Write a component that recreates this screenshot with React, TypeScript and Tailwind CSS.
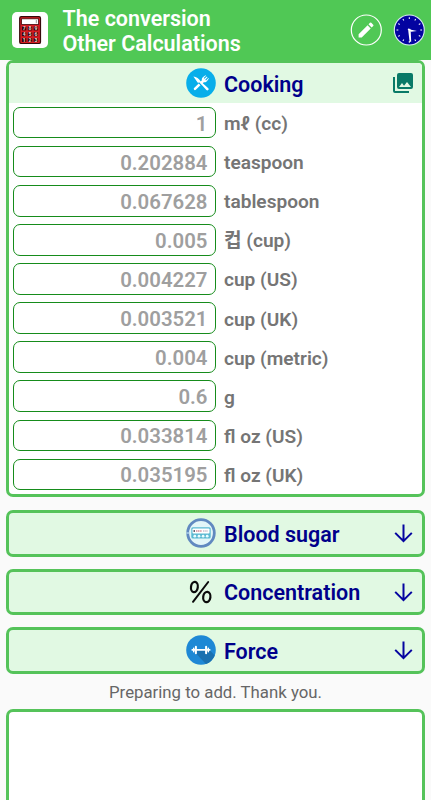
import { useState, type ReactNode } from "react";

type unitType = {
    name: string,
    value: string,
}

type sectionType = {
    title: string,
    icon: ReactNode,
}

const units: unitType[] = [
    { name: "mℓ (cc)", value: "1" },
    { name: "teaspoon", value: "0.202884" },
    { name: "tablespoon", value: "0.067628" },
    { name: "컵 (cup)", value: "0.005" },
    { name: "cup (US)", value: "0.004227" },
    { name: "cup (UK)", value: "0.003521" },
    { name: "cup (metric)", value: "0.004" },
    { name: "g", value: "0.6" },
    { name: "fl oz (US)", value: "0.033814" },
    { name: "fl oz (UK)", value: "0.035195" },
]

const CalculatorIcon = () => (
    <svg className="h-9 w-9" viewBox="0 0 36 36">
        <rect width="36" height="36" rx="5" fill="#fff" />
        <rect x="7.7" y="4.6" width="20.8" height="26.9" rx="1.6" fill="#d81c22" stroke="#35090b" strokeWidth="1.2" />
        <rect x="9.6" y="6.8" width="17" height="5.6" fill="#fff" stroke="#42090c" strokeWidth=".8" />
        <path d="M24.3 8v3.2" stroke="#999" strokeWidth="1" />
        {["789", "456", "123"].map((line, row) => line.split("").map((digit, col) => (
            <g key={digit}>
                <rect x={9.9 + col * 5.9} y={14.5 + row * 5.8} width="4.4" height="3.9" fill="#30090c" />
                <text x={12.1 + col * 5.9} y={18.2 + row * 5.8} fontSize="5" fontWeight="700" textAnchor="middle" fill="#f3cdcd">{digit}</text>
            </g>
        )))}
    </svg>
)

const EditIcon = () => (
    <svg className="h-8 w-8" viewBox="0 0 32 32">
        <circle cx="16.3" cy="16" r="15" fill="none" stroke="#fff" strokeWidth="1.2" />
        <path d="M8.6 20.3v3.1h3.1l9-9-3.1-3.1z M23.2 12a.9.9 0 0 0 0-1.3l-1.9-1.9a.9.9 0 0 0-1.3 0l-1.5 1.5 3.1 3.1z" fill="#fff" />
    </svg>
)

const ClockIcon = () => (
    <svg className="h-8 w-8" viewBox="0 0 32 32">
        <circle cx="16.3" cy="16" r="15" fill="#0303a0" stroke="#d9e8f2" strokeWidth="1.1" />
        {Array.from({ length: 12 }, (_, hour) => (
            <path key={hour} d="M16.3 3.2v1.8" stroke="#fff" strokeWidth="1" transform={`rotate(${hour * 30} 16.3 16)`} />
        ))}
        <path d="M14.6 15 24 17 16.2 18z M15 14.5l2.6.5.6 12.7h-1.6z" fill="#fff" />
    </svg>
)

const CookingIcon = () => (
    <svg className="h-[30px] w-[30px]" viewBox="0 0 30 30">
        <circle cx="15" cy="15" r="14.8" fill="#08aeea" />
        <path d="M12.7 15.4 8.1 20.1a1.15 1.15 0 0 0 1.7 1.7l4.7-4.6z" fill="#fff" />
        <path d="M7.4 8.4c3 .5 5.7 2.2 7.2 4.9l7.7 6.9a1.3 1.3 0 0 1-1.9 1.8l-6.8-7.4-1.8.2z" fill="#fff" />
        <path d="m13.7 14.6 2.2-2.3c-.3-1.5.1-2.4 1.2-3.3l2.4-1.8.5.5-2.3 2.4.7.7 2.5-2.2.6.6-2.2 2.5.7.7 2.4-2.3.5.5-1.8 2.4c-.9 1.1-1.8 1.5-3.3 1.2l-2.3 2.2z" fill="#fff" />
    </svg>
)

const BloodSugarIcon = () => (
    <svg className="h-[30px] w-[30px]" viewBox="0 0 30 30">
        <circle cx="15" cy="15" r="13.3" fill="#e3f6f8" stroke="#6189c0" strokeWidth="2.8" />
        <path d="M.4 15h3" stroke="#b9dcf0" strokeWidth="1.3" />
        <rect x="5.3" y="9.2" width="19.4" height="11.4" rx="1.5" fill="#5cb9d2" />
        <rect x="6.5" y="10.4" width="17" height="5.2" rx=".8" fill="#fff" />
        <path d="M7.5 13h1.5" stroke="#302c40" strokeWidth="1.6" />
        <path d="M10 13h6" stroke="#c65065" strokeWidth="1.2" strokeDasharray="1.3 .5" />
        <path d="M17 13h5" stroke="#9b819d" strokeWidth=".8" strokeDasharray="1.5 .7" />
        {[8.8, 13, 17.1, 21.2].map((x) => (
            <circle key={x} cx={x} cy="18.2" r="1.4" fill="#eafcff" />
        ))}
    </svg>
)

const PercentIcon = () => (
    <svg className="h-[30px] w-[30px]" viewBox="0 0 30 30" fill="none" stroke="#0b0b0b" strokeWidth="2.2" strokeLinecap="round">
        <ellipse cx="8.4" cy="10" rx="3.4" ry="5.1" transform="rotate(8 8.4 10)" />
        <ellipse cx="20.8" cy="20" rx="3.6" ry="5.1" transform="rotate(8 20.8 20)" />
        <path d="M22.2 5 7 24.8" strokeWidth="2" />
    </svg>
)

const ForceIcon = () => (
    <svg className="h-[30px] w-[30px]" viewBox="0 0 30 30">
        <circle cx="15" cy="15" r="14.8" fill="#1e88d5" />
        <path d="m10.5 19 9.4 10a14.8 14.8 0 0 0 8.8-8.6L22 13.3 20 15h-9z" fill="#1a70b0" />
        <path d="M6.2 14.9h17.6" stroke="#fff" strokeWidth="1.6" strokeLinecap="round" />
        <path d="M9.9 11.8v6.4M20.1 11.8v6.4" stroke="#fff" strokeWidth="2" strokeLinecap="round" />
        <path d="M7.7 13.2v3.6M22.3 13.2v3.6" stroke="#fff" strokeWidth="1.5" strokeLinecap="round" />
    </svg>
)

const GalleryIcon = () => (
    <svg className="h-6 w-6" viewBox="0 0 24 24">
        <path d="M22 16V4a2 2 0 0 0-2-2H8a2 2 0 0 0-2 2v12a2 2 0 0 0 2 2h12a2 2 0 0 0 2-2m-11-4 2.03 2.71L16 11l4 5H8zM2 6v14a2 2 0 0 0 2 2h14v-2H4V6" fill="#087a67" />
    </svg>
)

const DownIcon = () => (
    <svg className="h-6 w-6" viewBox="0 0 24 24" fill="none" stroke="#0505a0" strokeWidth="2">
        <path d="M12.5 3.5v16M4.2 11.9l8.3 8.3 8.3-8.3" />
    </svg>
)

const sections: sectionType[] = [
    { title: "Blood sugar", icon: <BloodSugarIcon /> },
    { title: "Concentration", icon: <PercentIcon /> },
    { title: "Force", icon: <ForceIcon /> },
]

const App = () => {
    const [values, setValues] = useState(units.map((unit) => unit.value))

    const handleInputChange = (index: number, value: string) => {
        setValues(prev => prev.map((item, i) => (i === index ? value : item)))
    };

    return (
        <div className="flex h-[800px] w-full flex-col overflow-hidden bg-[#fafafa] font-[Roboto,'Noto_Sans_CJK_KR',sans-serif]">
            <header className="flex h-[60px] shrink-0 items-center bg-[#50c855] pr-1.5 pl-3 text-white">
                <CalculatorIcon />
                <h1 className="ml-[14.5px] flex-1 pt-[2px] text-[21.5px] leading-[25px] font-semibold">
                    The conversion<br />Other Calculations
                </h1>
                <div className="flex gap-[11px]">
                    <EditIcon />
                    <ClockIcon />
                </div>
            </header>

            <div className="px-1.5">
                <section className="h-[437px] overflow-hidden rounded-[7px] border-[3px] border-[#55c35a] bg-white">
                    <div className="flex h-[40px] items-center bg-[#e1f9e3] pr-[7px] pl-[176.5px]">
                        <CookingIcon />
                        <h2 className="ml-[8.5px] flex-1 pt-[4px] text-[21.5px] font-semibold text-[#00008b]">Cooking</h2>
                        <GalleryIcon />
                    </div>
                    {units.map((unit, index) => (
                        <label key={unit.name} className="flex h-[39.1px] items-center pl-1">
                            <input
                                value={values[index]}
                                onChange={(e) => handleInputChange(index, e.target.value)}
                                className="h-[31.6px] w-[202.5px] rounded-[7px] border border-[#168c1b] bg-white pt-[2px] pr-[7px] text-right text-[20.4px] font-semibold text-[#9f9f9f] outline-none"
                            />
                            <span className="ml-[8.5px] h-7 pt-[1.5px] text-[19.1px] leading-7 font-semibold text-[#757575]">{unit.name}</span>
                        </label>
                    ))}
                </section>
            </div>

            <div className="mt-[13px] flex flex-col gap-3 px-1.5">
                {sections.map((section) => (
                    <button key={section.title} className="flex h-[46.6px] items-center rounded-[7px] border-[3px] border-[#55c35a] bg-[#e1f9e3] pr-[7px] pl-[176.5px] text-left">
                        {section.icon}
                        <span className="ml-[8.5px] flex-1 pt-[3px] text-[21.5px] font-semibold text-[#00008b]">{section.title}</span>
                        <DownIcon />
                    </button>
                ))}
            </div>

            <p className="flex h-[35.4px] shrink-0 items-center justify-center pt-[2px] text-[16.8px] text-[#666]">Preparing to add. Thank you.</p>

            <div className="flex-1 px-1.5">
                <div className="h-[120px] rounded-[7px] border-[3px] border-[#55c35a] bg-white" />
            </div>
        </div>
    );
};

export default App;
